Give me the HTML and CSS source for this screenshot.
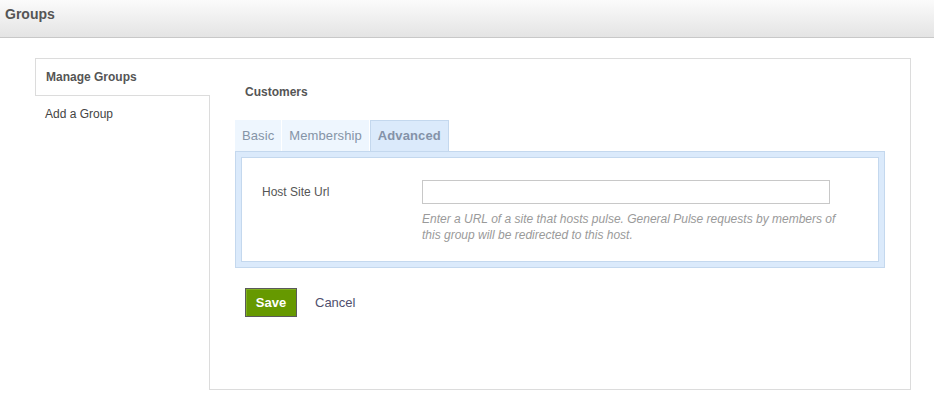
FILE: index.html
```html
<!DOCTYPE html>
<html>
<head>
<meta charset="utf-8">
<title>Groups</title>
<link rel="stylesheet" href="styles.css">
</head>
<body>
<div class="header"><h1 class="title">Groups</h1></div>
<div class="layout">
  <div class="nav">
    <div class="nav-active">Manage Groups</div>
    <div class="nav-rest"><a class="nav-link">Add a Group</a></div>
  </div>
  <div class="content">
    <h2 class="group-name">Customers</h2>
    <div class="tabs">
      <span class="tab">Basic</span>
      <span class="tab">Membership</span>
      <span class="tab tab-active">Advanced</span>
    </div>
    <div class="panel">
      <div class="panel-inner">
        <div class="field">
          <label class="field-label">Host Site Url</label>
          <div class="field-control">
            <input class="text-input" type="text">
            <p class="help">Enter a URL of a site that hosts pulse. General Pulse requests by members of this group will be redirected to this host.</p>
          </div>
        </div>
      </div>
    </div>
    <div class="actions">
      <button class="save">Save</button>
      <a class="cancel">Cancel</a>
    </div>
  </div>
</div>
</body>
</html>
```
FILE: styles.css
```css
* { box-sizing: border-box; }
body {
  margin: 0;
  font-family: "Liberation Sans", Arial, sans-serif;
  background: #fff;
  color: #555;
}
.header {
  height: 38px;
  background: linear-gradient(#fbfbfb, #e4e4e4);
  border-bottom: 1px solid #c8c8c8;
  padding: 6px 0 0 5px;
}
.title {
  margin: 0;
  font-size: 14px;
  line-height: 16px;
  font-weight: bold;
  color: #555;
}
.layout {
  display: flex;
  margin: 20px 23px 0 35px;
  height: 332px;
}
.nav {
  width: 175px;
  display: flex;
  flex-direction: column;
}
.nav-active {
  height: 38px;
  border: 1px solid #dcdcdc;
  border-right: none;
  padding-left: 10px;
  font-size: 12px;
  font-weight: bold;
  line-height: 36px;
  color: #555;
}
.nav-rest {
  flex: 1;
  border-right: 1px solid #dcdcdc;
  padding: 8px 0 0 10px;
}
.nav-link {
  font-size: 12px;
  line-height: 14px;
  color: #444;
}
.content {
  flex: 1;
  border: 1px solid #dcdcdc;
  border-left: none;
  padding: 26px 24px 0 25px;
}
.group-name {
  margin: 0 0 21px 10px;
  font-size: 12px;
  font-weight: bold;
  line-height: 14px;
  color: #555;
}
.tabs {
  display: flex;
  gap: 1px;
  height: 31px;
}
.tab {
  padding: 0 7px;
  background: #eef6fe;
  font-size: 13px;
  letter-spacing: 0.1px;
  line-height: 31px;
  color: #8594a7;
}
.tab-active {
  background: #dbeafb;
  border: 1px solid #c4d8ee;
  border-bottom: none;
  line-height: 30px;
  font-weight: bold;
  color: #8492a8;
}
.panel {
  width: 650px;
  background: #dbeafb;
  border: 1px solid #c4d8ee;
  padding: 5px;
}
.panel-inner {
  background: #fff;
  border: 1px solid #c4d8ee;
  padding: 22px 20px 18px 20px;
}
.field {
  display: flex;
}
.field-label {
  width: 160px;
  font-size: 12px;
  line-height: 24px;
  color: #555;
}
.text-input {
  display: block;
  width: 408px;
  height: 24px;
  border: 1px solid #c8c8c8;
  margin: 0;
  padding: 2px 4px;
  font-family: inherit;
}
.help {
  width: 430px;
  margin: 7px 0 0 0;
  font-size: 12px;
  line-height: 16px;
  font-style: italic;
  color: #9a9a9a;
}
.actions {
  display: flex;
  align-items: center;
  margin: 20px 0 0 10px;
  gap: 18px;
}
.save {
  width: 52px;
  height: 29px;
  background: #669900;
  border: 1px solid #5a5a5a;
  box-shadow: inset 1px 1px 0 #80b020;
  color: #fff;
  font-family: inherit;
  font-size: 13px;
  font-weight: bold;
  padding: 0;
}
.cancel {
  font-size: 13px;
  color: #50506e;
}
```
